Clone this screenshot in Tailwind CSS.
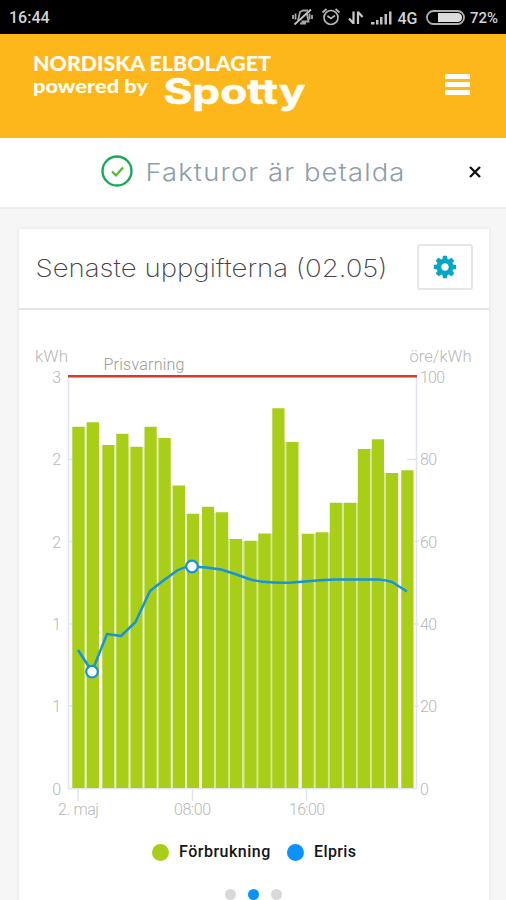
<!DOCTYPE html>
<html lang="sv">
  <head>
    <meta charset="UTF-8" />
    <meta name="viewport" content="width=device-width, initial-scale=1.0" />
    <title>Nordiska Elbolaget</title>
    <script src="https://cdn.jsdelivr.net/npm/@tailwindcss/browser@4"></script>
  </head>

  <body
    class="bg-[#f6f6f6] w-[506px] h-[900px] overflow-hidden font-['Roboto',sans-serif]"
  >
    <!-- status bar -->
    <div
      class="flex items-center h-[34px] bg-black text-[#d4d4d4] pl-[9px] pr-2"
    >
      <span class="text-base font-medium leading-none pt-[2px]">16:44</span>
      <div class="flex-grow"></div>
      <svg class="w-[214px] h-[34px]" viewBox="284 0 214 34" fill="none">
        <!-- muted bell -->
        <g stroke="#a8a8a8" stroke-width="1.8">
          <path d="M298 20.500l2-8.500 3-1.500h5M307 14l1.500 7.500h-7M300 23.500h6" />
          <path d="M311 9.500L294.500 24.500" stroke="#c4c4c4" />
          <path d="M293 15v4M295.500 13.500v6M309.500 13.500v6M312 15v4" />
        </g>
        <!-- alarm -->
        <g stroke="#b4b4b4" stroke-width="1.7">
          <circle cx="331" cy="17.500" r="7" />
          <path d="M327.500 16l3.500 2.500 4-3M322.500 12.500l4-3.500M339.500 12.500l-4-3.500" />
        </g>
        <!-- data arrows -->
        <path
          d="M353.500 11.500V24M353.500 23.500L349 18.500M358 24V11.500M358 12l4.500 5"
          stroke="#c8c8c8"
          stroke-width="2.2"
        />
        <!-- signal -->
        <g fill="#c0c0c0">
          <path d="M371 22h3.500v2.500H371zM376 20h2.500v4.500H376z" />
          <path d="M380 17h2.500v7.500H380zM384.500 14h2.500v10.500h-2.500z" />
          <path d="M389 11.500h2.500v13H389z" />
        </g>
        <text
          x="397.500"
          y="23.500"
          font-size="16"
          font-weight="500"
          fill="#d4d4d4"
          textLength="20"
          lengthAdjust="spacingAndGlyphs"
        >
          4G
        </text>
        <!-- battery -->
        <rect
          x="427"
          y="11"
          width="37"
          height="13"
          rx="6.500"
          stroke="#b0b0b0"
          stroke-width="1.800"
        />
        <path d="M438 13h20q4 .5 4 4.500t-4 4.500h-20z" fill="#dcdcdc" />
        <text
          x="470"
          y="23"
          font-size="15"
          font-weight="500"
          fill="#d4d4d4"
          textLength="28"
          lengthAdjust="spacingAndGlyphs"
        >
          72%
        </text>
      </svg>
    </div>

    <!-- header -->
    <header class="flex items-start h-[104px] bg-[#fdb71a] pl-8 pr-9 pt-4">
      <svg
        class="w-[276px] h-[66px]"
        viewBox="32 50 276 66"
        fill="#fffdf5"
        font-family="Lato, sans-serif"
        font-weight="900"
      >
        <text
          x="33"
          y="70.500"
          font-size="20.500"
          textLength="238"
          lengthAdjust="spacingAndGlyphs"
        >
          NORDISKA ELBOLAGET
        </text>
        <text
          x="33"
          y="92.500"
          font-size="19"
          textLength="115"
          lengthAdjust="spacingAndGlyphs"
        >
          powered by
        </text>
        <text
          x="163.500"
          y="104"
          font-family="Inter, sans-serif"
          font-size="35"
          font-weight="700"
          textLength="142"
          lengthAdjust="spacingAndGlyphs"
          stroke="#fffdf5"
          stroke-width=".6"
          stroke-linejoin="round"
        >
          Spotty
        </text>
      </svg>
      <div class="flex-grow"></div>
      <button class="flex flex-col gap-[3px] mt-6" type="button">
        <span class="w-[25px] h-[5px] rounded-[1px] bg-[#fffdf5]"></span>
        <span class="w-[25px] h-[5px] rounded-[1px] bg-[#fffdf5]"></span>
        <span class="w-[25px] h-[5px] rounded-[1px] bg-[#fffdf5]"></span>
      </button>
    </header>

    <!-- invoice notice -->
    <div
      class="flex items-center h-[71px] bg-white border-b-2 border-[#eeeeee] pl-[101px] pr-[23px]"
    >
      <svg class="w-8 h-8 mt-[-3px]" viewBox="0 0 32 32" fill="none">
        <circle cx="16" cy="16" r="14.500" stroke="#18a957" stroke-width="2.400" />
        <path d="M11 16.500l4 4 7-8" stroke="#50bd1e" stroke-width="2.200" />
      </svg>
      <svg class="w-[262px] h-8 ml-3" viewBox="145 157 262 32">
        <text
          x="145.500"
          y="180.500"
          font-family="Inter, sans-serif"
          font-size="24.500"
          font-weight="300"
          fill="#8f9eaa"
          textLength="260"
          letter-spacing="1"
          lengthAdjust="spacingAndGlyphs"
        >
          Fakturor är betalda
        </text>
      </svg>
      <div class="flex-grow"></div>
      <svg class="w-4 h-4 mt-[-1px]" viewBox="0 0 16 16" fill="none">
        <path d="M3 3l10 10M13 3L3 13" stroke="#111" stroke-width="2.300" />
      </svg>
    </div>

    <main class="pl-[19px] pr-[17px] pt-5">
      <section class="bg-white h-[700px] shadow-[0_0_4px_#00000018]">
        <div
          class="flex items-center h-[81px] border-b-2 border-[#e4e4e4] pl-4 pr-4"
        >
          <svg class="w-[354px] h-10" viewBox="35 249 354 40">
            <text
              x="35.500"
              y="276.500"
              font-family="Inter, sans-serif"
              font-size="24.500"
              font-weight="200"
              fill="#444"
              textLength="352"
              lengthAdjust="spacingAndGlyphs"
            >
              Senaste uppgifterna (02.05)
            </text>
          </svg>
          <div class="flex-grow"></div>
          <button
            class="flex items-center justify-center w-14 h-[46px] border-2 border-[#e6e6e6] rounded-[3px] mt-[-3px]"
            type="button"
          >
            <svg
              class="w-[26px] h-[26px]"
              viewBox="0 0 1792 1792"
              fill="#05a8c4"
            >
              <path
                d="M1152 896q0-106-75-181t-181-75-181 75-75 181 75 181 181 75 181-75 75-181zm512-109v222q0 12-8 23t-20 13l-185 28q-19 54-39 91 35 50 107 138 10 12 10 25t-9 23q-27 37-99 108t-94 71q-12 0-26-9l-138-108q-44 23-91 38-16 136-29 186-7 28-36 28h-222q-14 0-24.500-8.500t-11.500-21.500l-28-184q-49-16-90-37l-141 107q-10 9-25 9-14 0-25-11-126-114-165-168-7-10-7-23 0-12 8-23 15-21 51-66.500t54-70.500q-27-50-41-99l-183-27q-13-2-21-12.500t-8-23.500v-222q0-12 8-23t19-13l186-28q14-46 39-92-40-57-107-138-10-12-10-24 0-10 9-23 26-36 98.500-107.500t94.500-71.500q13 0 26 10l138 107q44-23 91-38 16-136 29-186 7-28 36-28h222q14 0 24.500 8.500t11.500 21.500l28 184q49 16 90 37l142-107q9-9 24-9 13 0 25 10 129 119 165 170 7 8 7 22 0 12-8 23-15 21-51 66.500t-54 70.500q26 50 41 98l183 28q13 2 21 12.500t8 23.500z"
              />
            </svg>
          </button>
        </div>

        <!-- consumption / price chart -->
        <svg
          class="block w-[470px] h-[514px]"
          viewBox="19 310 470 514"
          fill="none"
        >
          <path
            d="M68.500 377V788.500H416.500V377M68 459.500h5M68 541.500h5M68 624h5M68 706h5M407 459.500h10M414 541.500h5M414 624h5M414 706h5M78 789v12M192.500 789v12M306.500 789v12"
            stroke="#dfe4f0"
            stroke-width="1.500"
          />
          <!-- seams between neighbouring bars -->
          <path
            d="M84 427h3V788h-3zM114 445h3V788h-3zM128 447h3V788h-3zM142 447h3V788h-3zM156 438h3V788h-3zM170 486h3V788h-3zM184 514h3V788h-3z"
            fill="#e9f4cb"
          />
          <path
            d="M214 512.500h3V788h-3zM228 539h3V788h-3zM242 541h3V788h-3zM256 541h3V788h-3zM270 533.500h3V788h-3zM284 442h3V788h-3zM313 534h3V788h-3zM327 532.500h3V788h-3zM341 503h3V788h-3zM355 503h3V788h-3zM369.500 449h3V788h-3zM384 473h3V788h-3z"
            fill="#d6e99a"
          />
          <path
            d="M72.300 426.700h12.300V788H72.300zM86.700 422.300H99V788H86.700zM102.300 445h12V788h-12zM116.300 433.700h12.200V788h-12.200zM130.500 446.700h12V788h-12zM144.500 426.700h12.200V788h-12.200zM158.500 438h12.200V788h-12.200zM172.800 485.500H185V788h-12.200zM187 513.700h12.200V788H187zM202 506.700h12V788h-12zM216 512.300h12.200V788H216zM230 539h12V788h-12zM244.500 540.700h12V788h-12zM258.300 533.500h12.200V788h-12.200zM272.300 408.300h12.200V788h-12.200zM286.500 442h12V788h-12zM301.700 533.700h12V788h-12zM315.700 532.300h12.200V788h-12.200zM329.800 502.700h12V788h-12zM344 502.700h12V788h-12zM357.800 449H370v339h-12.200zM371.800 439.300H384V788h-12.200zM386 473h12.200v315H386zM401.300 470.300h12.200V788h-12.200z"
            fill="#a8ce17"
          />
          <path d="M68 376.200H417" stroke="#d93a26" stroke-width="2.500" />
          <path
            d="M78 650L92 671.500L107 634L121 636L135.500 622L150 591L164 580L178 570Q185 566.500 192 566.500L206 567.500L221 569.500L235 574L249 579Q256 581 263 581.700Q278 583 292 582.500L320 580.200L335 579.500H378Q386 580 392 582L407 591.500"
            stroke="#1592e0"
            stroke-width="2.500"
            stroke-linejoin="round"
          />
          <g fill="#fff" stroke="#1592e0" stroke-width="2.200">
            <circle cx="92" cy="671.700" r="5.800" />
            <circle cx="192" cy="566.500" r="5.800" />
          </g>
          <g
            font-family="Roboto, sans-serif"
            font-size="16"
            font-weight="300"
            fill="#b8b8b8"
          >
            <text
              x="35"
              y="362"
              textLength="33"
              lengthAdjust="spacingAndGlyphs"
            >
              kWh
            </text>
            <text
              x="409.500"
              y="362"
              textLength="62"
              lengthAdjust="spacingAndGlyphs"
            >
              öre/kWh
            </text>
            <text x="103.500" y="370" textLength="81" fill="#999">
              Prisvarning
            </text>
            <g text-anchor="end">
              <text x="61" y="383">3</text>
              <text x="61" y="465">2</text>
              <text x="61" y="547.500">2</text>
              <text x="61" y="630">1</text>
              <text x="61" y="712">1</text>
              <text x="61" y="794.500">0</text>
            </g>
            <text x="420" y="383" textLength="25">100</text>
            <text x="420" y="465" textLength="17">80</text>
            <text x="420" y="547.500" textLength="17">60</text>
            <text x="420" y="630" textLength="17">40</text>
            <text x="420" y="712" textLength="17">20</text>
            <text x="420" y="794.500">0</text>
            <text x="58" y="815" textLength="41">2. maj</text>
            <text x="174" y="815" textLength="37">08:00</text>
            <text x="289" y="815" textLength="36">16:00</text>
          </g>
        </svg>

        <!-- legend -->
        <div
          class="flex items-center h-5 mt-[18px] pl-[133px] text-base font-medium text-[#151515]"
        >
          <span class="w-[17px] h-[17px] rounded-full bg-[#a8ce17]"></span>
          <span class="ml-[10px] w-[92px] tracking-[0.5px]">Förbrukning</span>
          <span
            class="ml-4 w-[17px] h-[17px] rounded-full bg-[#0c93fb]"
          ></span>
          <span class="ml-[10px] tracking-[0.4px]">Elpris</span>
        </div>

        <!-- pager -->
        <div class="flex gap-3 mt-[27px] pl-[206px]">
          <span class="w-[11px] h-[11px] rounded-full bg-[#d9d9d9]"></span>
          <span class="w-[11px] h-[11px] rounded-full bg-[#0c93fb]"></span>
          <span class="w-[11px] h-[11px] rounded-full bg-[#d9d9d9]"></span>
        </div>
      </section>
    </main>
  </body>
</html>
